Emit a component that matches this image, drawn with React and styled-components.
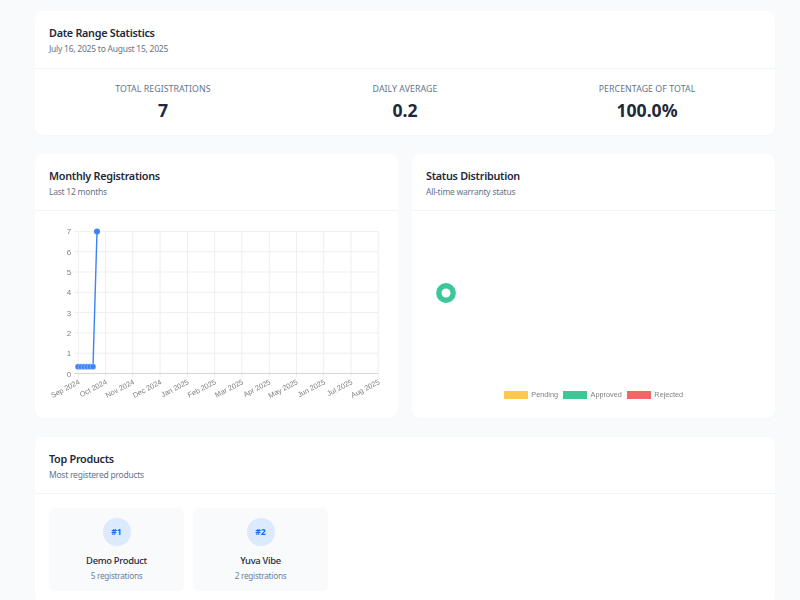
import React from "react";
import styled, { createGlobalStyle } from "styled-components";

const Global = createGlobalStyle`
  html, body { margin: 0; padding: 0; height: 600px; overflow: hidden; background: #f8fafc; }
  * { box-sizing: border-box; }
  body { font-family: "Noto Sans", "Open Sans", sans-serif; color: #1e293b; }
`;

const Page = styled.div`
  display: flex;
  flex-direction: column;
  gap: 19px;
  padding: 11px 25px 24px 35px;
`;
const Card = styled.section`
  background: #fff;
  border-radius: 8px;
  box-shadow: 0 1px 2px rgba(15, 23, 42, 0.02);
  overflow: hidden;
`;
const Header = styled.header`
  height: 57.5px;
  padding: 14px 14px 0;
  border-bottom: 1px solid #f1f3f6;
`;
const Title = styled.h2`
  margin: 0;
  font-size: 10.8px;
  line-height: 16px;
  letter-spacing: -0.27px;
  font-weight: 600;
  color: #1e293b;
`;
const Subtitle = styled.p`
  margin: 1px 0 0;
  font-size: 8.5px;
  line-height: 13px;
  letter-spacing: -0.24px;
  color: #64748b;
`;
const Stats = styled.div`
  display: grid;
  grid-template-columns: repeat(3, 1fr);
  gap: 14px;
  padding: 14px 14px 12px;
`;
const Stat = styled.div`
  text-align: center;
`;
const StatLabel = styled.div`
  font-size: 8.8px;
  line-height: 13px;
  letter-spacing: 0.05px;
  text-transform: uppercase;
  color: #64748b;
`;
const StatValue = styled.div`
  margin-top: 2px;
  font-size: 17.6px;
  line-height: 25px;
  font-weight: 700;
  color: #1e293b;
`;
const Columns = styled.div`
  display: grid;
  grid-template-columns: 363px 363px;
  gap: 14px;
`;
const ChartCard = styled(Card)`
  height: 264px;
  display: flex;
  flex-direction: column;
`;
const ChartBody = styled.div`
  flex: 1;
  display: flex;
  flex-direction: column;
  min-height: 0;
`;
const Plot = styled.svg`
  display: block;
  width: 363px;
  height: 206px;
  will-change: transform;
`;
const DonutArea = styled.div`
  flex: 1;
  display: flex;
  align-items: flex-start;
  padding: 72px 0 0 24px;
`;
const Legend = styled.div`
  display: flex;
  justify-content: center;
  gap: 5px;
  padding-bottom: 19px;
  font-family: "Liberation Sans", Arial, sans-serif;
  font-size: 7.3px;
  line-height: 9px;
  color: #808080;
  will-change: transform;
`;
const LegendItem = styled.div`
  display: flex;
  align-items: center;
  gap: 3.5px;
`;
const Swatch = styled.span`
  width: 24px;
  height: 8px;
  background: ${(p) => p.$color};
`;
const Products = styled.div`
  display: flex;
  gap: 9px;
  padding: 14px;
`;
const Product = styled.div`
  width: 135px;
  height: 83px;
  padding-top: 9.5px;
  border-radius: 6px;
  background: #f8fafc;
  display: flex;
  flex-direction: column;
  align-items: center;
`;
const Rank = styled.div`
  width: 28px;
  height: 28px;
  border-radius: 50%;
  background: #dbeafe;
  color: #2563eb;
  font-size: 8.6px;
  font-weight: 700;
  display: flex;
  align-items: center;
  justify-content: center;
`;
const ProductName = styled.div`
  margin-top: 8px;
  font-size: 9.4px;
  line-height: 14px;
  letter-spacing: -0.3px;
  font-weight: 500;
  color: #1e293b;
`;
const ProductCount = styled.div`
  margin-top: 2px;
  font-size: 8.2px;
  line-height: 12px;
  letter-spacing: -0.25px;
  color: #718096;
`;

const months = ["Sep 2024","Oct 2024","Nov 2024","Dec 2024","Jan 2025","Feb 2025","Mar 2025","Apr 2025","May 2025","Jun 2025","Jul 2025","Aug 2025"];
const X0 = 43.3, XSTEP = 27.27, Y0 = 162.5, YSTEP = 20.3;
const low = [43, 46, 49, 52, 55, 58];

function LineChart() {
  return (
    <Plot viewBox="0 0 363 206">
      {months.map((m, i) => {
        const x = X0 + XSTEP * i;
        return <line key={m} x1={x} x2={x} y1={Y0 - 7 * YSTEP} y2={Y0 + 4} stroke="#eeeeee" strokeWidth="1" />;
      })}
      {[0,1,2,3,4,5,6,7].map((v) => {
        const y = Y0 - v * YSTEP;
        return (
          <g key={v}>
            <line x1={X0 - 4} x2={X0 + XSTEP * 11} y1={y} y2={y} stroke={v === 0 ? "#d6d6d6" : "#efefef"} strokeWidth="1" />
            <text x={X0 - 7} y={y + 3} textAnchor="end" fontFamily="Liberation Sans, Arial, sans-serif" fontSize="8" fill="#808080">{v}</text>
          </g>
        );
      })}
      {months.map((m, i) => {
        const x = X0 + XSTEP * i + 2;
        return (
          <text key={m} transform={`translate(${x} ${Y0 + 10}) rotate(-27.7)`} textAnchor="end" fontFamily="Liberation Sans, Arial, sans-serif" fontSize="7.3" fill="#808080">{m}</text>
        );
      })}
      <polyline fill="none" stroke="#3b82f6" strokeWidth="1.4" points="43,155.7 58,155.7 62,20.5" />
      {low.map((x) => <circle key={x} cx={x} cy="155.7" r="2.9" fill="#3b82f6" stroke="#fff" strokeOpacity="0.6" strokeWidth="0.5" />)}
      <circle cx="62" cy="20.5" r="3" fill="#3b82f6" />
    </Plot>
  );
}

function Donut() {
  return (
    <svg width="20" height="20" viewBox="0 0 20 20">
      <circle cx="10" cy="10" r="7.2" fill="none" stroke="#3cc796" strokeWidth="5.4" />
    </svg>
  );
}

const legend = [["Pending", "#ffc84a"], ["Approved", "#3cc796"], ["Rejected", "#f56565"]];

export default function App() {
  return (
    <>
      <Global />
      <Page>
        <Card>
          <Header>
            <Title>Date Range Statistics</Title>
            <Subtitle>July 16, 2025 to August 15, 2025</Subtitle>
          </Header>
          <Stats>
            <Stat><StatLabel>Total Registrations</StatLabel><StatValue>7</StatValue></Stat>
            <Stat><StatLabel>Daily Average</StatLabel><StatValue>0.2</StatValue></Stat>
            <Stat><StatLabel>Percentage of Total</StatLabel><StatValue>100.0%</StatValue></Stat>
          </Stats>
        </Card>
        <Columns>
          <ChartCard>
            <Header>
              <Title>Monthly Registrations</Title>
              <Subtitle>Last 12 months</Subtitle>
            </Header>
            <ChartBody><LineChart /></ChartBody>
          </ChartCard>
          <ChartCard>
            <Header>
              <Title>Status Distribution</Title>
              <Subtitle>All-time warranty status</Subtitle>
            </Header>
            <ChartBody>
              <DonutArea><Donut /></DonutArea>
              <Legend>
                {legend.map(([label, color]) => (
                  <LegendItem key={label}><Swatch $color={color} />{label}</LegendItem>
                ))}
              </Legend>
            </ChartBody>
          </ChartCard>
        </Columns>
        <Card>
          <Header>
            <Title>Top Products</Title>
            <Subtitle>Most registered products</Subtitle>
          </Header>
          <Products>
            <Product><Rank>#1</Rank><ProductName>Demo Product</ProductName><ProductCount>5 registrations</ProductCount></Product>
            <Product><Rank>#2</Rank><ProductName>Yuva Vibe</ProductName><ProductCount>2 registrations</ProductCount></Product>
          </Products>
        </Card>
      </Page>
    </>
  );
}
